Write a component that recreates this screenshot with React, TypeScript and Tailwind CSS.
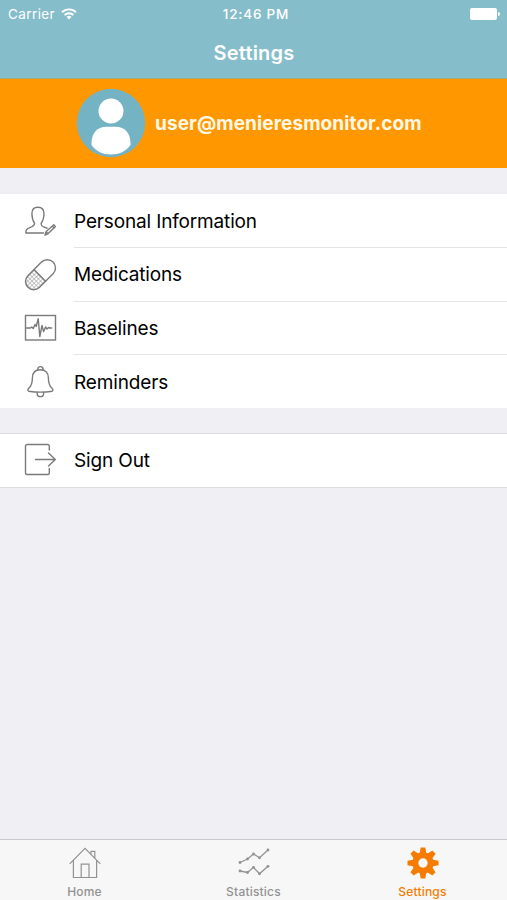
import type { ReactNode } from 'react';
import { clsx } from 'clsx';

function WifiIcon() {
  return (
    <svg width="16" height="12" viewBox="0 0 16 12" fill="none" stroke="white">
      <path d="M1 4.2a10 10 0 0 1 14 0" strokeWidth="1.9" />
      <path d="M3.6 7a6.3 6.3 0 0 1 8.8 0" strokeWidth="1.9" />
      <path d="M8 11.6 5.5 8.9a3.6 3.6 0 0 1 5 0z" fill="white" stroke="none" />
    </svg>
  );
}

function BatteryIcon() {
  return (
    <svg width="30" height="12" viewBox="0 0 30 12" fill="white">
      <rect width="27" height="12" rx="2" />
      <path d="M28 4a2 2 0 0 1 0 4z" />
    </svg>
  );
}

function Avatar() {
  return (
    <svg width="70" height="70" viewBox="0 0 70 70" className="shrink-0">
      <circle cx="35" cy="35" r="34.2" fill="#74b3c4" />
      <circle cx="35" cy="23" r="12.5" fill="white" />
      <path
        d="M15.5 57v-2C15.5 45 21.5 38.7 30 38.7h10C48.5 38.7 54.5 45 54.5 55v2C50 63.5 43 66.5 35 66.5S20 63.5 15.5 57z"
        fill="white"
      />
    </svg>
  );
}

function LineIcon({ children }: { children: ReactNode }) {
  return (
    <svg
      width="34"
      height="34"
      viewBox="0 0 34 34"
      fill="none"
      stroke="#7a7a7a"
      strokeWidth="1.4"
      strokeLinejoin="round"
      strokeLinecap="round"
    >
      {children}
    </svg>
  );
}

function PersonIcon() {
  return (
    <LineIcon>
      <path d="M20.5 29H2.800c-.2-2.900.9-4.300 4-5.300 3.500-1.200 4.800-1.900 4.800-4.400-1.800-2.500-2.700-5.700-2.700-9.800C8.900 5.300 11.200 3.200 14.900 3.200s6.100 2.100 6.100 6.300c0 4.100-1 7.300-2.900 9.800 0 2.600 1 3.200 4 4.200l2 .7" />
      <path d="M22 31.200l1-3.500 7.800-7 1.700 1.900-7.600 7.200zM23 27.700l1.900 2.100M29.300 22l1.800 2" />
    </LineIcon>
  );
}

function PillIcon() {
  return (
    <LineIcon>
      <defs>
        <pattern id="pill-mesh" width="3" height="3" patternUnits="userSpaceOnUse">
          <path d="M0 0h3M0 0v3" stroke="#777" strokeWidth=".8" />
        </pattern>
      </defs>
      <g transform="translate(.5 -.3) rotate(-45 17 17)">
        <path d="M16 8.800H7.400a8.200 8.200 0 0 0 0 16.400H16z" fill="url(#pill-mesh)" stroke="none" />
        <rect x="-.8" y="8.800" width="35.600" height="16.400" rx="8.200" />
        <path d="M16 8.800v16.400" />
      </g>
    </LineIcon>
  );
}

function PulseIcon() {
  return (
    <LineIcon>
      <rect x="2.500" y="4.500" width="30" height="24.500" strokeLinejoin="miter" />
      <path d="M3.500 17h4l1.200-1 1.500 1.600L12 13.500l1.200 2L15.200 7.800l1.600 17.700 2.200-11 1.600 6 2-4.500 1.500 2 1.600-1.500 1 .5h2" />
    </LineIcon>
  );
}

function BellIcon() {
  return (
    <LineIcon>
      <path d="M14.800 5v-.8a2.600 2.600 0 0 1 5.200 0V5" />
      <path d="M5.700 26.200c-1.300-.5-1-2 .3-3.200 3.200-2.900 3.400-5.500 3.400-10C9.400 7.800 12.200 4.800 17.400 4.800s8 3 8 8.200c0 4.500.2 7.100 3.400 10 1.300 1.200 1.600 2.700.3 3.200-7.700 1.200-15.700 1.200-23.400 0z" />
      <path d="M14.200 27.400v1a3.200 3.200 0 0 0 6.400 0v-1" />
    </LineIcon>
  );
}

function SignOutIcon() {
  return (
    <LineIcon>
      <path d="M26.300 7V3A1.500 1.500 0 0 0 24.800 1.500H4A1.500 1.500 0 0 0 2.500 3v27A1.500 1.500 0 0 0 4 31.500h20.800a1.500 1.500 0 0 0 1.500-1.500v-4.500" />
      <path d="M12.500 16.500h19.700M25.500 10l6.800 6.500-6.800 6.500" />
    </LineIcon>
  );
}

function HomeIcon() {
  return (
    <svg width="32" height="32" viewBox="0 0 32 32" fill="none" stroke="#929292" strokeWidth="1.2">
      <path d="M.7 16.800L16 1.300l15.300 15.500M4.400 13.500v17h23.200v-17M12.200 30.500V17.200h7.800v13.300M22 7V4.300h3.800V11" />
    </svg>
  );
}

const statLines = [
  [[2, 15.5], [9.5, 12], [15.5, 7], [21.5, 10.8], [30, 3]],
  [[2, 24], [9.5, 25.5], [15.5, 20.3], [21.5, 26.8], [30, 19.3]],
];

function StatisticsIcon() {
  return (
    <svg width="32" height="32" viewBox="0 0 32 32" fill="none" stroke="#929292" strokeWidth="1.3">
      {statLines.map((points, i) => (
        <g key={i}>
          <polyline points={points.join(' ')} />
          {points.map(([x, y]) => (
            <circle key={x} cx={x} cy={y} r="1.4" fill="#929292" stroke="none" />
          ))}
        </g>
      ))}
    </svg>
  );
}

function GearIcon() {
  return (
    <svg width="32" height="32" viewBox="-16 -16 32 32" fill="#f57c00">
      {[0, 45, 90, 135].map((angle) => (
        <path
          key={angle}
          d="M-3.300-10L-2.300-15.500h4.600L3.300-10V10L2.300 15.500h-4.600L-3.300 10z"
          transform={`rotate(${angle})`}
        />
      ))}
      <circle r="10.700" />
      <circle r="4.700" fill="#f7f7f7" />
    </svg>
  );
}

interface RowProps {
  icon: ReactNode;
  label: string;
  last?: boolean;
}

function Row({ icon, label, last }: RowProps) {
  return (
    <li className={clsx('flex items-center pl-[23px]', last ? 'h-[53px]' : 'h-[53.8px]')}>
      <span className="w-[51px] shrink-0">{icon}</span>
      <span
        className={clsx(
          'flex h-full flex-1 items-center text-[19px] tracking-[-0.15px] text-black',
          last ? 'pt-[2px]' : 'border-b border-[#e4e4e6] pt-[3px]'
        )}
      >
        {label}
      </span>
    </li>
  );
}

interface TabProps {
  icon: ReactNode;
  label: string;
  active?: boolean;
}

function Tab({ icon, label, active }: TabProps) {
  return (
    <button
      type="button"
      className={clsx(
        'flex flex-1 flex-col items-center pt-[7px] text-[12px] leading-[16px] font-medium tracking-[0.2px]',
        active ? 'text-[#f57c00]' : 'text-[#929292]'
      )}
    >
      {icon}
      <span className="mt-[5px]">{label}</span>
    </button>
  );
}

export default function App() {
  return (
    <div className="flex h-[900px] w-[507px] flex-col overflow-hidden bg-[#efeff4] font-['Inter','Liberation_Sans',sans-serif]">
      <header className="h-[79px] shrink-0 border-b border-[#a9a77b] bg-[#86bdcb] text-white">
        <div className="grid h-[27px] grid-cols-3 items-center pr-[7px] pl-[8px] text-[13.5px]">
          <div className="flex items-center gap-[6px]">
            <span className="pt-px tracking-[0.4px]">Carrier</span>
            <WifiIcon />
          </div>
          <span className="pt-px pl-[4px] text-center font-medium tracking-[0.8px]">12:46 PM</span>
          <div className="flex justify-end">
            <BatteryIcon />
          </div>
        </div>
        <h1 className="pt-[11px] pl-[1px] text-center text-[20px] leading-[30px] font-semibold tracking-[0.2px]">Settings</h1>
      </header>

      <section className="flex h-[89px] shrink-0 items-center bg-[#ff9800] pb-[2px] pl-[76px]">
        <Avatar />
        <span className="ml-[9px] pt-[3px] text-[19px] font-bold tracking-[0.09px] text-[#fff8e8]">
          user@menieresmonitor.com
        </span>
      </section>

      <main className="flex-1 pt-[26px]">
        <ul className="bg-white">
          <Row icon={<PersonIcon />} label="Personal Information" />
          <Row icon={<PillIcon />} label="Medications" />
          <Row icon={<PulseIcon />} label="Baselines" />
          <Row icon={<BellIcon />} label="Reminders" last />
        </ul>
        <ul className="mt-[24.6px] border-y border-[#dedee2] bg-white">
          <Row icon={<SignOutIcon />} label="Sign Out" last />
        </ul>
      </main>

      <nav className="flex h-[61px] shrink-0 border-t border-[#c9c9cd] bg-[#f7f7f7]">
        <Tab icon={<HomeIcon />} label="Home" />
        <Tab icon={<StatisticsIcon />} label="Statistics" />
        <Tab icon={<GearIcon />} label="Settings" active />
      </nav>
    </div>
  );
}
